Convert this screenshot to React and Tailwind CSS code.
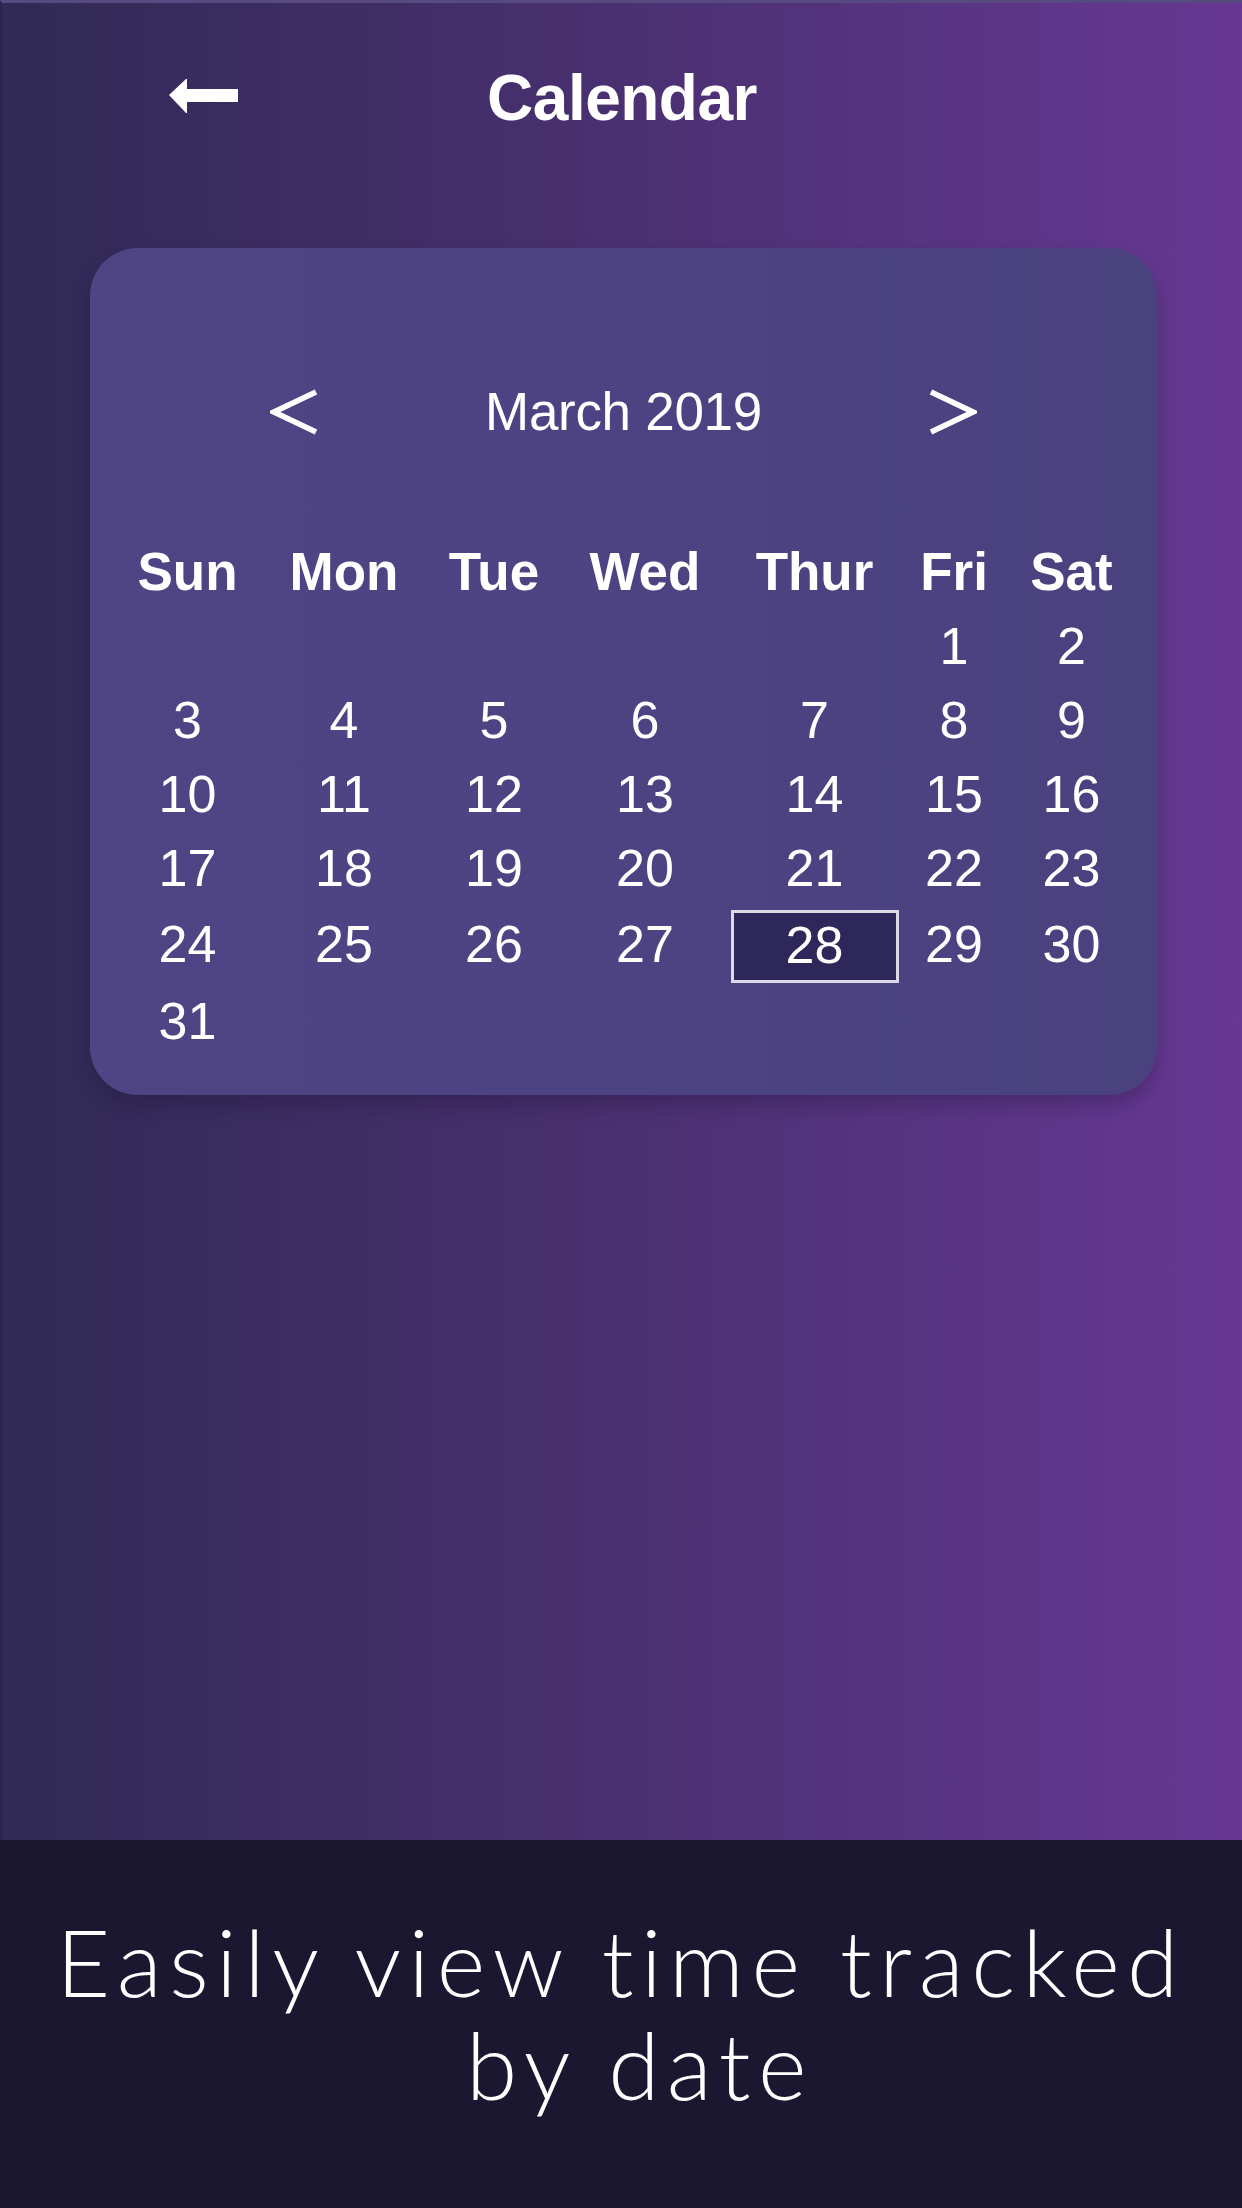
import React from "react";

const rows = [
  ["", "", "", "", "", "1", "2"],
  ["3", "4", "5", "6", "7", "8", "9"],
  ["10", "11", "12", "13", "14", "15", "16"],
  ["17", "18", "19", "20", "21", "22", "23"],
  ["24", "25", "26", "27", "28", "29", "30"],
  ["31", "", "", "", "", "", ""],
];

const days = ["Sun", "Mon", "Tue", "Wed", "Thur", "Fri", "Sat"];

const cols = "grid grid-cols-[157px_156px_144px_158px_181px_98px_137px]";

export default function App() {
  return (
    <div
      className="w-[1242px] h-[2208px] flex flex-col overflow-hidden"
      style={{ fontFamily: '"Liberation Sans", Arial, sans-serif' }}
    >
      <div className="h-[1840px] bg-linear-to-r/srgb from-[#302a55] via-[#4a3071] to-[#673893] border-t-[3px] border-t-[#574a80] border-l-2 border-l-[#29244a] flex flex-col">
        {/* header */}
        <div className="mt-[55px] grid grid-cols-[1fr_auto_1fr] items-center h-[80px]">
          <div className="pl-[164px] flex items-center">
            <svg width="74" height="40" viewBox="0 0 74 40">
              <path
                d="M3 17 L20 1 L21 1 L21 11 L72 11 L72 24 L21 24 L21 35 L20 35 Z"
                fill="#ffffff"
              />
            </svg>
          </div>
          <div className="text-white font-bold text-[64px] leading-[80px] tracking-[-0.5px]">
            Calendar
          </div>
          <div />
        </div>

        {/* card */}
        <div className="mt-[110px] ml-[88px] w-[1067px] rounded-[48px] bg-linear-to-r/srgb from-[#4f4585] to-[#4a417f] shadow-[0_10px_18px_rgba(20,10,40,0.25)] pt-[134px] pb-[37px] pl-[19px] text-white">
          {/* month nav */}
          <div className="flex items-center justify-center gap-[167px] h-[60px] pr-[19px]">
            <svg width="48" height="46" viewBox="0 0 48 46">
              <polyline
                points="46,3 4,23 46,43"
                fill="none"
                stroke="#ffffff"
                strokeWidth="5.5"
                strokeLinejoin="miter"
              />
            </svg>
            <div className="text-[53px] leading-[60px] font-normal tracking-[-0.3px]">March 2019</div>
            <svg width="48" height="46" viewBox="0 0 48 46">
              <polyline
                points="2,3 44,23 2,43"
                fill="none"
                stroke="#ffffff"
                strokeWidth="5.5"
                strokeLinejoin="miter"
              />
            </svg>
          </div>

          {/* weekday header */}
          <div className={`${cols} mt-[93px] h-[74px] items-center`}>
            {days.map((d) => (
              <div key={d} className="text-center font-bold text-[53px] leading-[74px]">
                {d}
              </div>
            ))}
          </div>

          {/* day rows */}
          {rows.map((r, i) => (
            <div
              key={i}
              className={`${cols} ${i === 4 ? "h-[79px]" : "h-[74px]"}`}
            >
              {r.map((d, j) =>
                d === "28" ? (
                  <div key={j} className="flex justify-center pt-[5px]">
                    <div className="w-[168px] h-[73px] border-[3px] border-[#dcdae6] bg-[#2e2759] flex items-center justify-center pb-[3px] text-[52px] leading-[60px]">
                      28
                    </div>
                  </div>
                ) : (
                  <div
                    key={j}
                    className={`flex items-center justify-center text-[52px] ${
                      i === 4 ? "leading-[79px]" : "leading-[74px]"
                    }`}
                  >
                    {d}
                  </div>
                )
              )}
            </div>
          ))}
        </div>
      </div>

      {/* bottom caption */}
      <div className="flex-1 bg-[#1c1731] pt-[70px] flex flex-col items-center">
        <div
          className="text-white text-[93px] leading-[103px] font-light tracking-[0.08em] text-center"
          style={{ fontFamily: 'Lato, "Open Sans", sans-serif' }}
        >
          <div>Easily view time tracked</div>
          <div className="pl-[38px]">by date</div>
        </div>
      </div>
    </div>
  );
}
